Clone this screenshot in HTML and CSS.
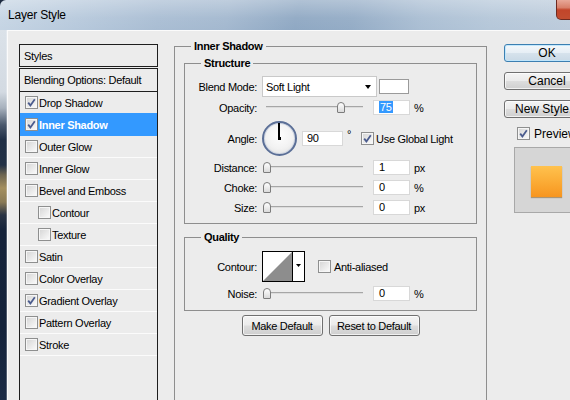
FILE: index.html
```html
<!DOCTYPE html>
<html>
<head>
<meta charset="utf-8">
<title>Layer Style</title>
<link rel="stylesheet" href="styles.css">
</head>
<body>
<div class="window">
  <div class="titlebar">
    <span class="title">Layer Style</span>
    <div class="close"></div>
  </div>
  <div class="frame">
    <div class="glass"></div>
    <div class="client">
      <div class="styles-panel">
        <div class="styles-head">Styles</div>
        <div class="styles-list">
          <div class="srow blending">Blending Options: Default</div>
          <div class="srow"><span class="cb on"><svg viewBox="0 0 11 11" width="11" height="11"><path d="M2.2 5.6 L4.4 8.4 L8.8 2.2" stroke="#4b5c8e" stroke-width="1.8" fill="none"/></svg></span>Drop Shadow</div>
          <div class="srow sel"><span class="cb on"><svg viewBox="0 0 11 11" width="11" height="11"><path d="M2.2 5.6 L4.4 8.4 L8.8 2.2" stroke="#4b5c8e" stroke-width="1.8" fill="none"/></svg></span>Inner Shadow</div>
          <div class="srow"><span class="cb"></span>Outer Glow</div>
          <div class="srow"><span class="cb"></span>Inner Glow</div>
          <div class="srow"><span class="cb"></span>Bevel and Emboss</div>
          <div class="srow sub"><span class="cb"></span>Contour</div>
          <div class="srow sub"><span class="cb"></span>Texture</div>
          <div class="srow"><span class="cb"></span>Satin</div>
          <div class="srow"><span class="cb"></span>Color Overlay</div>
          <div class="srow"><span class="cb on"><svg viewBox="0 0 11 11" width="11" height="11"><path d="M2.2 5.6 L4.4 8.4 L8.8 2.2" stroke="#4b5c8e" stroke-width="1.8" fill="none"/></svg></span>Gradient Overlay</div>
          <div class="srow"><span class="cb"></span>Pattern Overlay</div>
          <div class="srow"><span class="cb"></span>Stroke</div>
        </div>
      </div>

      <div class="group outer">
        <span class="gtitle">Inner Shadow</span>

        <div class="group structure">
          <span class="gtitle">Structure</span>
          <div class="row r-blend">
            <span class="lbl">Blend Mode:</span>
            <div class="select"><span>Soft Light</span><span class="arrow"></span></div>
            <div class="swatch"></div>
          </div>
          <div class="row r-opacity">
            <span class="lbl">Opacity:</span>
            <div class="slider"><div class="track"></div><div class="thumb" style="left:75px"></div></div>
            <div class="field"><span class="hl">75</span></div>
            <span class="unit">%</span>
          </div>
          <div class="row r-angle">
            <span class="lbl">Angle:</span>
            <div class="dial"><div class="hand"></div><div class="pivot"></div></div>
            <div class="field angle">90</div>
            <span class="deg">°</span>
            <span class="cb on gl"><svg viewBox="0 0 11 11" width="11" height="11"><path d="M2.2 5.6 L4.4 8.4 L8.8 2.2" stroke="#4b5c8e" stroke-width="1.8" fill="none"/></svg></span>
            <span class="cbtext">Use Global Light</span>
          </div>
          <div class="row r-slider">
            <span class="lbl">Distance:</span>
            <div class="slider"><div class="track"></div><div class="thumb" style="left:1px"></div></div>
            <div class="field">1</div>
            <span class="unit">px</span>
          </div>
          <div class="row r-slider">
            <span class="lbl">Choke:</span>
            <div class="slider"><div class="track"></div><div class="thumb" style="left:1px"></div></div>
            <div class="field">0</div>
            <span class="unit">%</span>
          </div>
          <div class="row r-slider">
            <span class="lbl">Size:</span>
            <div class="slider"><div class="track"></div><div class="thumb" style="left:1px"></div></div>
            <div class="field">0</div>
            <span class="unit">px</span>
          </div>
        </div>

        <div class="group quality">
          <span class="gtitle">Quality</span>
          <div class="row r-contour">
            <span class="lbl">Contour:</span>
            <svg class="contour" width="43" height="31" viewBox="0 0 43 31">
              <rect x="0.5" y="0.5" width="42" height="30" fill="#ffffff" stroke="#000000"/>
              <polygon points="1,30 30,1 30,30" fill="#8d8d8d"/>
              <line x1="30.5" y1="1" x2="30.5" y2="30" stroke="#000000"/>
              <polygon points="34,13 39,13 36.5,16" fill="#000000"/>
            </svg>
            <span class="cb aa"></span>
            <span class="cbtext">Anti-aliased</span>
          </div>
          <div class="row r-slider">
            <span class="lbl">Noise:</span>
            <div class="slider"><div class="track"></div><div class="thumb" style="left:1px"></div></div>
            <div class="field">0</div>
            <span class="unit">%</span>
          </div>
        </div>

        <div class="btnrow">
          <div class="btn make">Make Default</div>
          <div class="btn reset">Reset to Default</div>
        </div>
      </div>

      <div class="side">
        <div class="pbtn ok">OK</div>
        <div class="pbtn">Cancel</div>
        <div class="pbtn">New Style...</div>
        <div class="preview-row">
          <span class="cb on"><svg viewBox="0 0 11 11" width="11" height="11"><path d="M2.2 5.6 L4.4 8.4 L8.8 2.2" stroke="#4b5c8e" stroke-width="1.8" fill="none"/></svg></span>
          <span class="ptext">Preview</span>
        </div>
        <div class="preview-box"><div class="orange"></div></div>
      </div>
    </div>
  </div>
</div>
</body>
</html>
```

FILE: styles.css
```css
* { box-sizing: border-box; }
html, body { margin: 0; padding: 0; }
body {
  width: 570px;
  height: 400px;
  overflow: hidden;
  background: #1c2a40;
  font-family: "Liberation Sans", Arial, sans-serif;
  font-size: 11px;
  letter-spacing: -0.3px;
  color: #000;
}
.window {
  width: 570px;
  height: 400px;
  display: flex;
  flex-direction: column;
  overflow: hidden;
}
.titlebar {
  height: 30px;
  flex: none;
  position: relative;
  border-radius: 6px 0 0 0;
  background:
    linear-gradient(180deg, rgba(255,255,255,0.30) 0%, rgba(255,255,255,0.05) 60%, rgba(255,255,255,0) 100%),
    linear-gradient(100deg, #c6d5e4 0%, #b7c9dc 14%, #a9bdd3 28%, #a3b8cf 40%, #8fa8c3 52%, #94acc6 62%, #aabed3 74%, #b5c7d9 86%, #bccbdb 100%);
  display: flex;
  align-items: center;
  padding-left: 8px;
}
.title {
  font-size: 12px;
  letter-spacing: -0.2px;
  color: #000;
}
.close {
  position: absolute;
  right: -12px;
  top: 0;
  width: 26px;
  height: 20px;
  border: 1px solid #6e2a20;
  border-top: none;
  border-radius: 0 0 0 5px;
  background: linear-gradient(180deg, #e8a898 0%, #d8806a 40%, #c2452a 52%, #c24d30 100%);
}
.frame {
  flex: 1;
  display: flex;
  min-height: 0;
}
.glass {
  width: 7px;
  flex: none;
  background: linear-gradient(180deg,
    #dbe2e9 0px, #d3dae2 62px, #a7b1bd 78px, #4a586c 95px,
    #1f2e45 110px, #223146 135px, #6d6550 145px, #a48f5f 158px,
    #8a7a55 172px, #2a3444 185px, #15233a 200px, #14223a 300px, #1b2b45 370px);
  border-right: 1px solid rgba(255,255,255,0.25);
}
.client {
  flex: 1;
  background: #ececec;
  border-top: 1px solid #fbfbfb;
  border-left: 1px solid #fbfbfb;
  display: flex;
  align-items: flex-start;
  padding: 13px 0 0 11px;
  overflow: hidden;
}

/* Styles list */
.styles-panel {
  width: 139px;
  flex: none;
}
.styles-head {
  height: 23px;
  border: 1px solid #1e1e1e;
  padding-left: 4px;
  display: flex;
  align-items: center;
}
.styles-list {
  margin-top: 1px;
  border: 1px solid #1e1e1e;
  border-bottom: none;
  height: 400px;
}
.srow {
  height: 22px;
  border-bottom: 1px solid #fbfbfb;
  display: flex;
  align-items: center;
  padding-left: 5px;
  white-space: nowrap;
}
.srow.blending {
  height: 23px;
  padding-left: 4px;
  border-bottom: 1px solid #1e1e1e;
}
.srow.sub { padding-left: 18px; }
.srow.sel {
  background: #3399ff;
  border-bottom-color: #3399ff;
  box-shadow: 0 -1px 0 #3399ff;
  color: #fff;
  font-weight: bold;
}
.cb {
  width: 13px;
  height: 13px;
  flex: none;
  border: 1px solid #8e8f8f;
  background: linear-gradient(135deg, #d4d4d4 0%, #ececec 60%, #fcfcfc 100%);
  box-shadow: inset 0 0 0 1px #f6f6f6;
  margin-right: 1px;
  display: flex;
  align-items: center;
  justify-content: center;
}
.cb svg { display: block; }

/* Group boxes */
.group {
  position: relative;
  border: 1px solid #8e8e8e;
}
.gtitle {
  position: absolute;
  top: -7px;
  left: 16px;
  padding: 0 3px;
  background: #ececec;
  font-weight: bold;
  line-height: 13px;
  white-space: nowrap;
}
.outer {
  flex: none;
  width: 313px;
  height: 420px;
  margin: 2px 0 0 16px;
  padding: 16px 9px 0;
}
.structure { padding: 12px 0 7px; }
.quality { margin-top: 13px; padding: 13px 0 8px; }

.row {
  display: flex;
  align-items: center;
  white-space: nowrap;
}
.lbl {
  width: 72px;
  flex: none;
  text-align: right;
  margin-right: 5px;
}
.r-blend { height: 21px; }
.r-opacity { height: 17px; margin-top: 2px; }
.r-angle { height: 35px; margin-top: 5px; }
.r-slider { height: 17px; margin-top: 3px; }
.r-contour { height: 31px; }

.select {
  width: 115px;
  height: 21px;
  flex: none;
  background: #fff;
  border: 1px solid #c9c9c9;
  display: flex;
  align-items: center;
  justify-content: space-between;
  padding: 0 5px 0 3px;
}
.arrow {
  width: 0;
  height: 0;
  border-left: 3.5px solid transparent;
  border-right: 3.5px solid transparent;
  border-top: 4px solid #000;
}
.swatch {
  width: 30px;
  height: 15px;
  margin-left: 2px;
  background: #fff;
  border: 1px solid #9a9a9a;
}

.slider {
  position: relative;
  width: 106px;
  height: 17px;
  flex: none;
}
.track {
  position: absolute;
  left: 4px;
  right: 5px;
  top: 7px;
  height: 2px;
  border-top: 1px solid #a6a6a6;
  background: #dcdcdc;
}
.thumb {
  position: absolute;
  top: 3px;
  width: 8px;
  height: 11px;
  border: 1px solid #7c7c7c;
  border-radius: 4px 4px 1px 1px;
  background: linear-gradient(180deg, #ffffff, #dadada);
}
.field {
  width: 37px;
  height: 15px;
  flex: none;
  margin-left: 5px;
  background: #fff;
  border: 1px solid #d8d8d8;
  padding-left: 5px;
  line-height: 13px;
}
.field.angle {
  width: 41px;
  margin-left: 5px;
  padding-left: 4px;
}
.hl {
  background: #3399ff;
  color: #fff;
  padding: 0 1px;
}
.unit { margin-left: 4px; }
.deg {
  margin-left: 4px;
  align-self: flex-start;
  margin-top: 8px;
  line-height: 11px;
}
.cb.gl { margin-left: 10px; }
.cbtext { margin-left: 1px; }

.dial {
  position: relative;
  width: 35px;
  height: 35px;
  flex: none;
  border-radius: 50%;
  border: 2px solid #5b6f97;
  background: radial-gradient(circle at 50% 40%, #fefefe 0%, #f2f2f2 55%, #d9d9d9 100%);
  box-shadow: inset 0 0 0 1px #cfd6e3;
}
.hand {
  position: absolute;
  left: 14px;
  top: 0;
  width: 2px;
  height: 15px;
  background: #000;
}
.pivot {
  position: absolute;
  left: 13.5px;
  top: 13.5px;
  width: 3px;
  height: 3px;
  background: #000;
}

.contour { display: block; flex: none; }
.cb.aa { margin-left: 13px; margin-right: 2px; }

.btnrow {
  margin-top: 4px;
  display: flex;
  justify-content: center;
  gap: 6px;
}
.btn {
  height: 21px;
  border: 1px solid #707070;
  border-radius: 3px;
  background: linear-gradient(180deg, #f4f4f4 0%, #ebebeb 48%, #dddddd 52%, #cfcfcf 100%);
  box-shadow: inset 0 0 0 1px rgba(255,255,255,0.7);
  display: flex;
  align-items: center;
  justify-content: center;
}
.btn.make { width: 81px; }
.btn.reset { width: 91px; }

/* Right side */
.side {
  margin-left: 17px;
  flex: none;
  width: 100px;
  display: flex;
  flex-direction: column;
}
.pbtn {
  width: 86px;
  height: 18px;
  flex: none;
  border: 1px solid #707070;
  border-radius: 3px;
  background: linear-gradient(180deg, #f4f4f4 0%, #ebebeb 48%, #dddddd 52%, #cfcfcf 100%);
  box-shadow: inset 0 0 0 1px rgba(255,255,255,0.7);
  display: flex;
  align-items: center;
  justify-content: center;
  font-size: 12px;
  letter-spacing: 0;
  white-space: nowrap;
  overflow: hidden;
  margin-top: 10px;
}
.pbtn.ok {
  margin-top: 0;
  border-color: #3c7fb1;
  background: linear-gradient(180deg, #f4f8fb 0%, #e6eef5 48%, #d6e2ec 52%, #c9d9e6 100%);
  box-shadow: inset 0 0 0 1px rgba(190,230,253,0.9);
}
.preview-row {
  margin-top: 9px;
  height: 13px;
  padding-left: 13px;
  display: flex;
  align-items: center;
}
.ptext {
  margin-left: 3px;
  font-size: 12px;
  letter-spacing: 0;
}
.preview-box {
  margin: 7px 0 0 10px;
  width: 80px;
  height: 66px;
  background: #d6d6d6;
  border: 1px solid #a8a8a8;
  padding: 18px 0 0 16px;
}
.orange {
  width: 31px;
  height: 31px;
  background: linear-gradient(180deg, #ffc24e 0%, #fbaa34 55%, #f7951f 100%);
  box-shadow: 0 1px 1px rgba(120,70,0,0.45);
}
```
